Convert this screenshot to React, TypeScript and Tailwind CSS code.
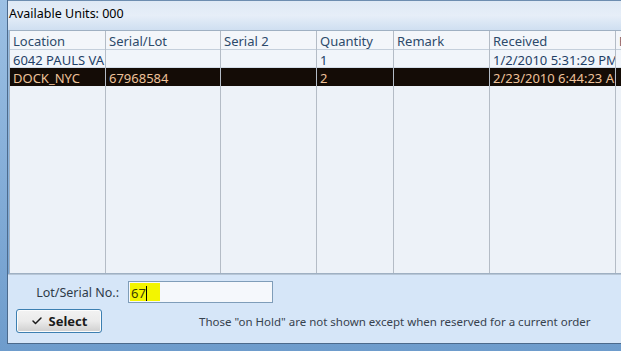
import { Check } from "lucide-react";

const cols = [
  { label: "Location", w: "w-[96px]" },
  { label: "Serial/Lot", w: "w-[115px]" },
  { label: "Serial 2", w: "w-[96px]" },
  { label: "Quantity", w: "w-[77px]" },
  { label: "Remark", w: "w-[96px]" },
  { label: "Received", w: "w-[126px]" },
  { label: "Reserved", w: "w-[60px]" },
];

const rows = [
  { cells: ["6042 PAULS VA", "", "", "1", "", "1/2/2010 5:31:29 PM", ""], selected: false },
  { cells: ["DOCK_NYC", "67968584", "", "2", "", "2/23/2010 6:44:23 AM", ""], selected: true },
];

export default function App() {
  return (
    <div
      className="w-[621px] h-[351px] overflow-hidden flex flex-col bg-gradient-to-b from-[#9cc0e4] to-[#6e9ccc] pl-[7px] pb-[7px] text-[13px] leading-none"
      style={{ fontFamily: "'Noto Sans', 'Open Sans', sans-serif" }}
    >
      <div className="flex-1 flex flex-col border-l border-b border-[#4c6a8c] min-h-0">
        {/* title strip */}
        <div className="h-[30px] shrink-0 bg-gradient-to-b from-[#dfe9f5] via-[#e6eef8] to-[#cfdff1] border-t border-[#6d8db0] pl-[1px] pt-[7px] text-[12.5px] text-black">
          Available Units: 000
        </div>

        {/* grid */}
        <div className="h-[244px] shrink-0 ml-[1px] border border-r-0 border-[#9fb0c2] bg-[#edf2f8] flex overflow-hidden">
          {cols.map((c, ci) => (
            <div
              key={c.label}
              className={`${c.w} shrink-0 flex flex-col ${ci < cols.length - 1 ? "border-r border-[#b4bcc6]" : ""}`}
            >
              <div className="h-[19px] shrink-0 bg-[#f3f6fa] border-b border-[#c4cfdb] px-[3px] pt-[4px] text-[#2d4a6a] whitespace-nowrap overflow-hidden">
                {c.label}
              </div>
              {rows.map((r, ri) => (
                <div
                  key={ri}
                  className={`h-[18px] shrink-0 px-[3px] pt-[4px] whitespace-nowrap overflow-hidden ${
                    r.selected
                      ? "bg-[#140c06] text-[#eec29a]"
                      : "bg-[#f1f5fa] border-b border-[#d4dde8] text-[#1f3f66]"
                  }`}
                >
                  {r.cells[ci]}
                </div>
              ))}
            </div>
          ))}
        </div>

        {/* bottom panel */}
        <div className="flex-1 bg-[#d6e6f8] border-t border-[#b7c6d6] flex flex-col pl-[8px] pt-[6px]">
          <div className="flex items-center h-[22px]">
            <span className="w-[112px] text-right pr-[9px] pt-[2px] text-[12.5px] text-[#2f3b48]">Lot/Serial No.:</span>
            <div className="w-[145px] h-[22px] border border-[#7f9db9] bg-[#f5f8fc] flex items-center pl-[1px]">
              <span className="bg-[#f3f500] h-[18px] w-[30px] flex items-center pl-[1px] pt-[2px] text-[#3b3b00]">
                67<span className="w-[1px] h-[15px] bg-black" />
              </span>
            </div>
          </div>
          <div className="flex items-center mt-[6px]">
            <button className="w-[86px] h-[24px] rounded-[3px] border border-[#3c7fb1] bg-gradient-to-b from-[#f2f2f2] via-[#ebebeb] to-[#cfcfcf] flex items-center justify-center gap-[6px] font-bold text-[13px] text-[#1b1b1b] shadow-[inset_0_0_0_1px_#fcfcfc]">
              <Check size={12} strokeWidth={3} />
              Select
            </button>
            <span className="ml-[97px] pt-[2px] whitespace-nowrap text-[11.5px] text-[#37424e]">
              Those "on Hold" are not shown except when reserved for a current order
            </span>
          </div>
        </div>
      </div>
    </div>
  );
}
